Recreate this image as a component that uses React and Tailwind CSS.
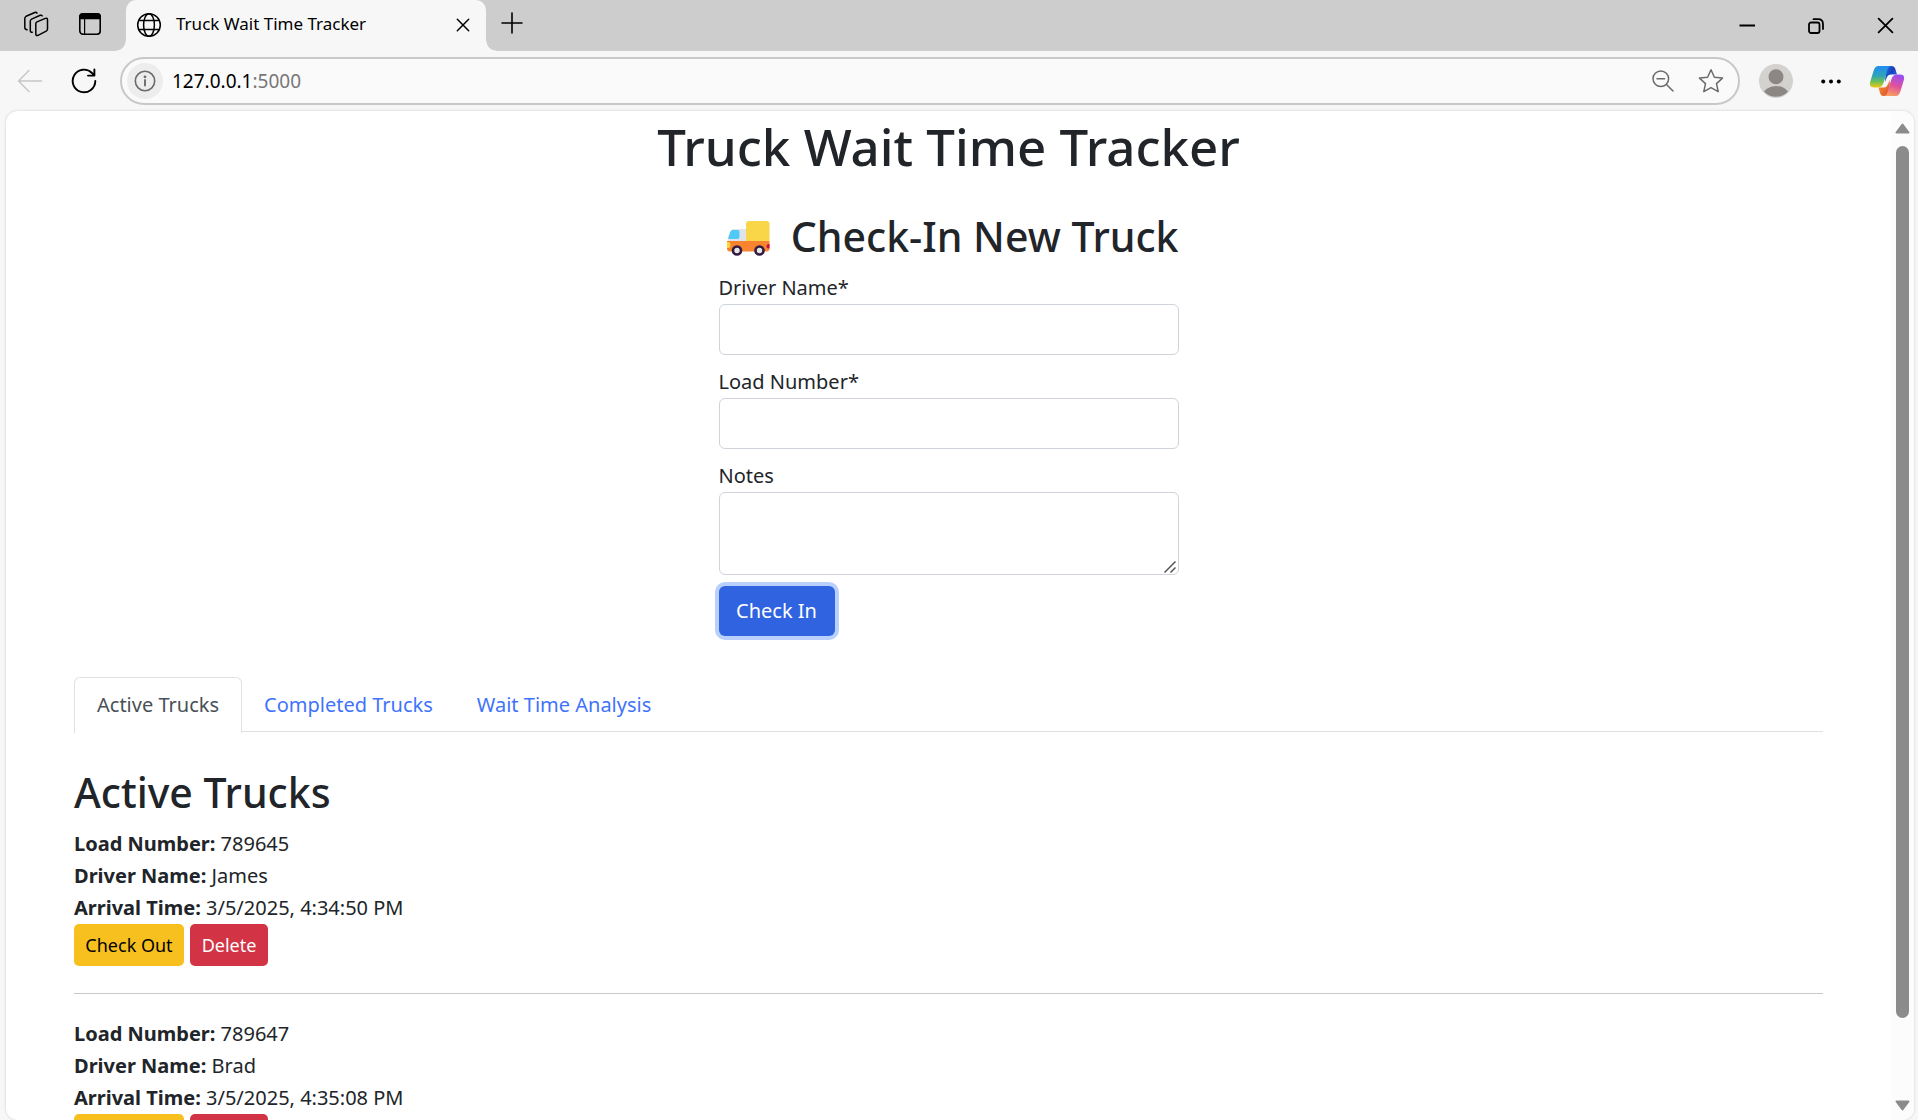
import React from "react";

const trucks = [
  { load: "789645", driver: "James", arrival: "3/5/2025, 4:34:50 PM" },
  { load: "789647", driver: "Brad", arrival: "3/5/2025, 4:35:08 PM" },
];

const line = { fill: "none", stroke: "currentColor", strokeLinecap: "round", strokeLinejoin: "round" };

function WorkspacesIcon() {
  return (
    <svg width="26" height="26" viewBox="0 0 26 26" {...line} strokeWidth="1.5">
      <path d="M14 10.900 22.300 7.400Q24.500 6.600 24.500 9V18Q24.500 19.400 23.200 20.200L15 24.300Q12.800 25.200 12.800 23V12.800Q12.800 11.500 14 10.900Z" />
      <path d="M9.300 21.300Q7.300 21.400 7.300 19.400V10.200Q7.300 8.800 8.600 8.100L17.200 4.300Q18.600 3.800 19.200 4.900" />
      <path d="M4.100 18.800Q1.800 18.600 1.800 16.600V7.400Q1.800 6 3.100 5.300L11.800 1.500Q13.400 1 14 2.200" />
    </svg>
  );
}

function TabLayoutIcon() {
  return (
    <svg width="24" height="24" viewBox="0 0 24 24" {...line} strokeWidth="1.6">
      <rect x="1.8" y="1.8" width="20.4" height="20.4" rx="3.2" />
      <path d="M1.8 6.5V5Q1.8 1.8 5 1.8H19Q22.2 1.8 22.2 5V6.5Z" fill="currentColor" />
      <path d="M6.600 7V22" strokeWidth="1.200" />
    </svg>
  );
}

function GlobeIcon() {
  return (
    <svg width="26" height="26" viewBox="0 0 26 26" {...line} strokeWidth="1.5">
      <circle cx="13" cy="13" r="11.3" />
      <ellipse cx="13" cy="13" rx="5.4" ry="11.3" />
      <path d="M3 8.5H23M3 17.5H23" />
    </svg>
  );
}

function CrossIcon({ size }) {
  return (
    <svg width={size} height={size} viewBox="0 0 16 16" {...line} strokeWidth="1.7">
      <path d="M1.5 1.5 14.5 14.5M14.5 1.5 1.5 14.5" />
    </svg>
  );
}

function CopilotIcon() {
  return (
    <svg width="36" height="34" viewBox="0 0 36 34">
      <defs>
        <linearGradient id="left" x1="0" y1="0" x2="0" y2="1">
          <stop offset="0.1" stopColor="#2391e8" />
          <stop offset="0.45" stopColor="#2fa3b8" />
          <stop offset="0.72" stopColor="#6cc05a" />
          <stop offset="1" stopColor="#f2c80f" />
        </linearGradient>
        <linearGradient id="right" x1="0.6" y1="0" x2="0.3" y2="1">
          <stop offset="0" stopColor="#9a4df0" />
          <stop offset="0.5" stopColor="#e0529c" />
          <stop offset="1" stopColor="#fba15f" />
        </linearGradient>
        <linearGradient id="top" x1="0" y1="0" x2="1" y2="0.6">
          <stop offset="0" stopColor="#1d6fe0" />
          <stop offset="0.6" stopColor="#1a3fbf" />
          <stop offset="1" stopColor="#2c62e6" />
        </linearGradient>
        <linearGradient id="bottom" x1="0" y1="0" x2="1" y2="1">
          <stop offset="0" stopColor="#f2a51e" />
          <stop offset="1" stopColor="#e0433f" />
        </linearGradient>
      </defs>
      <path d="M17 2H23Q25.400 2 26.200 4.600L28 10.500H21.500Q19 10.500 18 13L16 18Z" fill="url(#top)" />
      <path d="M20 32H14.500Q12 32 11.200 29.400L9.500 23.500H15Q17.500 23.500 18.500 21L21 16Z" fill="url(#bottom)" />
      <path d="M9.500 2H22Q19.600 2.300 18.600 5.600L14.700 18.600Q13.200 23.500 9 23.500H5Q-0.500 23.500 1.300 17.500L4.500 7Q6 2 9.500 2Z" fill="url(#left)" />
      <path d="M27 32H15Q17.400 31.700 18.400 28.400L22.300 15.400Q23.800 10.500 28 10.500H31Q36.500 10.500 34.700 16.500L31.500 27Q30 32 27 32Z" fill="url(#right)" />
    </svg>
  );
}

function TruckIcon() {
  return (
    <svg width="44" height="36" viewBox="0 0 44 36" className="mt-1" role="img" aria-label="Truck">
      <path d="M7 9H20V22H1.500L4 12Q5 9 7 9Z" fill="#dfe3ea" />
      <path d="M7 10H11.500Q13.500 10 13.500 12V17Q13.500 19 11.500 19H3.500Q1.800 19 2.300 17.500L4.200 12Q5 10 7 10Z" fill="#50c8f8" />
      <path d="M20 4Q20 1 23 1H40.500Q43.500 1 43.500 4V21.500H20Z" fill="#f9d548" />
      <path d="M1 21H43.500V28.500Q43.500 31.500 40.500 31.500H4Q1 31.500 1 28.500Z" fill="#f8842f" />
      <path d="M1 22H2Q4.500 22 4.500 25Q4.500 28 2 28H1Z" fill="#fcd53f" />
      <path d="M43.500 24H43Q40.500 24 40.500 26.500Q40.500 28.500 43 28.500H43.500Z" fill="#ca0b4a" />
      <circle cx="11" cy="30.500" r="4" fill="#e6e6e6" stroke="#321b41" strokeWidth="2.600" />
      <circle cx="33.500" cy="30.500" r="4" fill="#e6e6e6" stroke="#321b41" strokeWidth="2.600" />
    </svg>
  );
}

function TitleBar() {
  return (
    <header className="flex h-[51px] items-stretch bg-[#cdcdcd] text-black">
      <div className="flex w-[126px] items-center gap-[29px] pb-1 pl-[23px]">
        <button aria-label="Workspaces"><WorkspacesIcon /></button>
        <button aria-label="Tab actions"><TabLayoutIcon /></button>
      </div>
      <div className="relative flex w-[360px] items-center rounded-t-[10px] bg-[#f7f7f7] pb-[2px] pl-[10px] pr-4">
        <span className="absolute bottom-0 right-full size-[10px] bg-[radial-gradient(circle_at_0_0,#cdcdcd_9px,#f7f7f7_10px)]" />
        <span className="absolute bottom-0 left-full size-[10px] bg-[radial-gradient(circle_at_100%_0,#cdcdcd_9px,#f7f7f7_10px)]" />
        <GlobeIcon />
        <span className="ml-[14px] flex-1 whitespace-nowrap pb-[2px] text-[17px]">Truck Wait Time Tracker</span>
        <button aria-label="Close tab"><CrossIcon size={14} /></button>
      </div>
      <button aria-label="New tab" className="ml-[15px] pb-[5px]">
        <svg width="22" height="22" viewBox="0 0 22 22" {...line} strokeWidth="1.600"><path d="M11 1V21M1 11H21" /></svg>
      </button>
      <div className="flex flex-1 items-center justify-end gap-[53px] pr-[24px]">
        <button aria-label="Minimize"><svg width="16" height="16" viewBox="0 0 16 16"><path d="M0.500 7.500H16" stroke="#000" strokeWidth="2" /></svg></button>
        <button aria-label="Restore">
          <svg width="16" height="16" viewBox="0 0 16 16" {...line} strokeWidth="1.800">
            <rect x="1" y="4.500" width="10.500" height="10.500" rx="2" />
            <path d="M5.500 1.200H10Q15 1.200 15 6.200V11" />
          </svg>
        </button>
        <button aria-label="Close"><CrossIcon size={17} /></button>
      </div>
    </header>
  );
}

function Toolbar() {
  return (
    <div className="flex h-[60px] items-center pl-4 pr-[13px]">
      <button aria-label="Back" className="text-[#c6c6c6]">
        <svg width="28" height="24" viewBox="0 0 28 24" {...line} strokeWidth="1.500"><path d="M25.500 12H2.500M13 1.500 2.500 12 13 22.500" /></svg>
      </button>
      <button aria-label="Refresh" className="ml-[27px] text-black">
        <svg width="26" height="26" viewBox="0 0 26 26" {...line} strokeWidth="1.900"><path d="M24.300 13A11.300 11.300 0 1 1 21 5L23.400 7.400M23.400 1.500V7.600H17" /></svg>
      </button>
      <div className="ml-[23px] flex h-12 flex-1 items-center rounded-full border-2 border-[#c8c8c8] bg-[#fafafa] pl-[5px] pr-[14px]">
        <button aria-label="Site information" className="flex size-9 items-center justify-center rounded-full bg-[#ededed] text-[#6b6b6b]">
          <svg width="22" height="22" viewBox="0 0 22 22" {...line} strokeWidth="1.600">
            <circle cx="11" cy="11" r="9.700" /><path d="M11 10V15.500" strokeWidth="1.900" /><circle cx="11" cy="6.800" r="0.600" fill="currentColor" />
          </svg>
        </button>
        <div className="ml-[9px] flex-1 text-[19px] text-black">127.0.0.1<span className="text-[#777]">:5000</span></div>
        <button aria-label="Zoom" className="text-[#6b6b6b]">
          <svg width="22" height="22" viewBox="0 0 22 22" {...line} strokeWidth="1.500"><circle cx="8.800" cy="8.800" r="7.800" /><path d="M5 8.800H12.600M14.500 14.500 21 21" /></svg>
        </button>
        <button aria-label="Favorite" className="ml-6 text-[#6b6b6b]">
          <svg width="26" height="26" viewBox="0 0 26 26" {...line} strokeWidth="1.500"><path d="M13 1.800 16.400 9.200 24.500 10.100 18.500 15.600 20.200 23.600 13 19.600 5.800 23.600 7.500 15.600 1.500 10.100 9.600 9.200Z" /></svg>
        </button>
      </div>
      <button aria-label="Profile" className="ml-[19px]">
        <svg width="34" height="34" viewBox="0 0 34 34">
          <clipPath id="face"><circle cx="17" cy="17" r="15.800" /></clipPath>
          <circle cx="17" cy="17" r="17" fill="#d4d2cf" />
          <g clipPath="url(#face)" fill="#8c8785"><circle cx="17" cy="12.800" r="7.500" /><ellipse cx="17" cy="31" rx="13" ry="9" /></g>
        </svg>
      </button>
      <button aria-label="More" className="ml-7">
        <svg width="20" height="6" viewBox="0 0 20 6"><circle cx="2.200" cy="3.500" r="2" /><circle cx="10" cy="3.500" r="2" /><circle cx="17.800" cy="3.500" r="2" /></svg>
      </button>
      <button aria-label="Copilot" className="ml-7"><CopilotIcon /></button>
    </div>
  );
}

function ScrollBar() {
  return (
    <div className="flex w-[23px] flex-col items-center bg-[#fcfcfc] pb-[9px] pt-3">
      <svg width="15" height="11" viewBox="0 0 15 11"><path d="M7.500 1.500 13.500 9.500H1.500Z" fill="#8b8b8b" stroke="#8b8b8b" strokeWidth="2" strokeLinejoin="round" /></svg>
      <div className="mb-[82px] mt-3 w-[13px] flex-1 rounded-full bg-[#8b8b8b]" />
      <svg width="15" height="11" viewBox="0 0 15 11"><path d="M7.500 9.500 13.500 1.500H1.500Z" fill="#8b8b8b" stroke="#8b8b8b" strokeWidth="2" strokeLinejoin="round" /></svg>
    </div>
  );
}

function CheckInForm() {
  const field = "block w-full rounded-md border border-[#ced4da] bg-white px-4 outline-none";
  return (
    <form className="mx-auto mt-8 w-[460px]" onSubmit={(e) => e.preventDefault()}>
      <h2 className="flex items-center justify-between whitespace-nowrap pl-[7px] text-[41px] font-medium leading-[52px]">
        <TruckIcon /> <span>Check-In New Truck</span>
      </h2>
      <label htmlFor="driver" className="mt-[10px] block leading-8">Driver Name*</label>
      <input id="driver" type="text" className={`${field} h-[51px]`} />
      <label htmlFor="load" className="mt-[11px] block leading-8">Load Number*</label>
      <input id="load" type="text" className={`${field} h-[51px]`} />
      <label htmlFor="notes" className="mt-[11px] block leading-8">Notes</label>
      <div className="relative">
        <textarea id="notes" className={`${field} h-[83px] resize-none`} />
        <svg className="pointer-events-none absolute bottom-[2px] right-[3px]" width="12" height="12" viewBox="0 0 12 12" stroke="#555" strokeWidth="1.500">
          <path d="M0.500 11.500 11.500 0.500M6.500 11.500 11.500 6.500" />
        </svg>
      </div>
      <button type="submit" className="mt-[11px] block h-[50px] w-[116px] rounded-md bg-[#2f63df] text-white ring-4 ring-[#b9d0fd]">Check In</button>
    </form>
  );
}

function TruckEntry({ truck }) {
  return (
    <li className="border-b border-[#c8c9ca] pb-[27px] pt-6 first:pt-0">
      <p><b>Load Number:</b> {truck.load}</p>
      <p><b>Driver Name:</b> {truck.driver}</p>
      <p><b>Arrival Time:</b> {truck.arrival}</p>
      <div className="flex gap-[6px] text-lg">
        <button className="h-[42px] w-[110px] rounded-[5px] bg-[#f7c01f] text-black">Check Out</button>
        <button className="h-[42px] w-[78px] rounded-[5px] bg-[#d23446] text-white">Delete</button>
      </div>
    </li>
  );
}

export default function App() {
  return (
    <div className="flex h-screen flex-col overflow-hidden bg-[#f7f7f7] font-['Noto_Sans','Open_Sans',sans-serif]">
      <TitleBar />
      <Toolbar />
      <div className="ml-[6px] mr-1 flex min-h-0 flex-1 overflow-hidden rounded-xl bg-white shadow-[0_0_2px_1px_#e2e2e2]">
        <main className="min-w-0 flex-1 overflow-hidden px-[68px] text-xl leading-8 text-[#212529]">
          <h1 className="pt-[3px] text-center text-[51px] font-medium leading-[64px]">Truck Wait Time Tracker</h1>
          <CheckInForm />
          <nav className="mt-[41px] flex border-b border-[#dee2e6]">
            <a href="#active" className="-mb-[2px] rounded-t-md border border-b-0 border-[#dee2e6] bg-white px-[22px] pb-3 pt-[11px] text-[#495057]">Active Trucks</a>
            <a href="#completed" className="px-[22px] pt-3 text-[#3f73fb]">Completed Trucks</a>
            <a href="#analysis" className="px-[22px] pt-3 text-[#3f73fb]">Wait Time Analysis</a>
          </nav>
          <h2 className="mt-[34px] text-[41px] font-medium leading-[52px]">Active Trucks</h2>
          <ul className="mt-[10px]">
            {trucks.map((t) => <TruckEntry key={t.load} truck={t} />)}
          </ul>
        </main>
        <ScrollBar />
      </div>
    </div>
  );
}
